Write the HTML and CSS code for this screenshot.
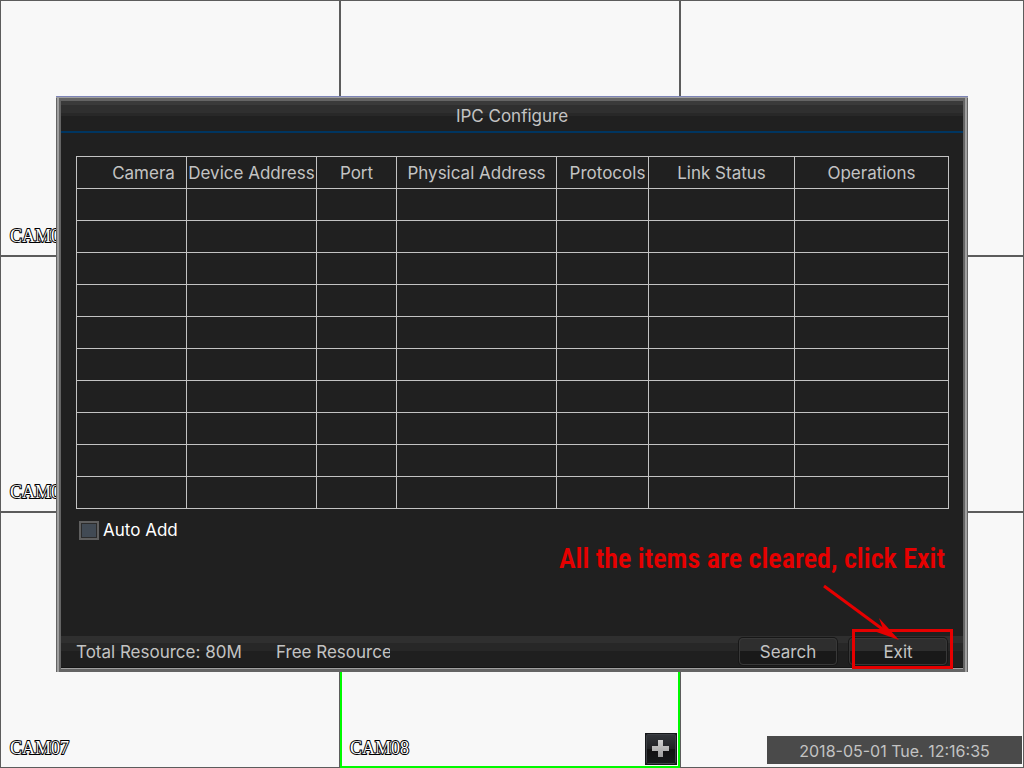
FILE: index.html
```html
<!DOCTYPE html>
<html lang="en">
<head>
<meta charset="utf-8">
<title>IPC Configure</title>
<link rel="stylesheet" href="styles.css">
</head>
<body>
<main class="wall">
  <section class="cell"><span class="cam">CAM01</span></section>
  <section class="cell"><span class="cam">CAM02</span></section>
  <section class="cell"><span class="cam">CAM03</span></section>
  <section class="cell"><span class="cam">CAM04</span></section>
  <section class="cell"><span class="cam">CAM05</span></section>
  <section class="cell"><span class="cam">CAM06</span></section>
  <section class="cell"><span class="cam">CAM07</span></section>
  <section class="cell cell-active">
    <span class="cam">CAM08</span>
    <button class="add" type="button" aria-label="Add camera">
      <svg viewBox="0 0 32 32" width="32" height="32" aria-hidden="true">
        <defs>
          <linearGradient id="plus" x1="0" y1="0" x2="0" y2="1"><stop offset="0" stop-color="#d0d0d0"/><stop offset="1" stop-color="#9c9c9c"/></linearGradient>
          <linearGradient id="tile" x1="0" y1="0" x2="0" y2="1"><stop offset="0" stop-color="#33363b"/><stop offset=".5" stop-color="#202124"/><stop offset=".52" stop-color="#111"/><stop offset="1" stop-color="#17191b"/></linearGradient>
        </defs>
        <rect width="32" height="32" fill="#15171a"/>
        <rect x="1.500" y="1.500" width="29" height="29" rx="1" fill="url(#tile)" stroke="#3d4045"/>
        <path d="M13 7h5v6h6v5h-6v6h-5v-6H7v-5h6z" fill="url(#plus)"/>
      </svg>
    </button>
  </section>
  <section class="cell cell-clock"><time class="clock" datetime="2018-05-01T12:16:35">2018-05-01 Tue. 12:16:35</time></section>
</main>

<div class="overlay">
  <div class="dialog" role="dialog" aria-labelledby="dialog-title">
    <h1 class="title" id="dialog-title">IPC Configure</h1>
    <div class="body">
      <table class="devices">
        <colgroup><col class="c-camera"><col class="c-address"><col class="c-port"><col class="c-physical"><col class="c-protocols"><col class="c-link"><col class="c-operations"></colgroup>
        <thead>
          <tr><th class="h-camera">Camera</th><th>Device Address</th><th>Port</th><th>Physical Address</th><th class="h-protocols">Protocols</th><th>Link Status</th><th>Operations</th></tr>
        </thead>
        <tbody>
          <tr><td></td><td></td><td></td><td></td><td></td><td></td><td></td></tr>
          <tr><td></td><td></td><td></td><td></td><td></td><td></td><td></td></tr>
          <tr><td></td><td></td><td></td><td></td><td></td><td></td><td></td></tr>
          <tr><td></td><td></td><td></td><td></td><td></td><td></td><td></td></tr>
          <tr><td></td><td></td><td></td><td></td><td></td><td></td><td></td></tr>
          <tr><td></td><td></td><td></td><td></td><td></td><td></td><td></td></tr>
          <tr><td></td><td></td><td></td><td></td><td></td><td></td><td></td></tr>
          <tr><td></td><td></td><td></td><td></td><td></td><td></td><td></td></tr>
          <tr><td></td><td></td><td></td><td></td><td></td><td></td><td></td></tr>
          <tr><td></td><td></td><td></td><td></td><td></td><td></td><td></td></tr>
        </tbody>
      </table>
      <label class="auto"><input type="checkbox" class="check">Auto Add</label>
      <p class="note">All the items are cleared, click Exit</p>
    </div>
    <footer class="footer">
      <span class="total">Total Resource: 80M</span>
      <span class="free">Free Resource</span>
      <div class="actions">
        <button class="btn" type="button">Search</button>
        <div class="marked">
          <button class="btn" type="button">Exit</button>
          <span class="frame"></span>
          <svg class="arrow" viewBox="0 0 80 60" width="80" height="60" aria-hidden="true">
            <path d="M3 5 64 50" stroke="#e60000" stroke-width="3" fill="none"/>
            <path d="M58 37 78 59 50 49 62 48z" fill="#e60000"/>
          </svg>
        </div>
      </div>
    </footer>
  </div>
</div>
</body>
</html>
```

FILE: styles.css
```css
* { box-sizing: border-box; }
body {
  margin: 0;
  background: #f8f8f8;
  color: #c3c3c3;
  font: 17px/20px Inter, "Liberation Sans", sans-serif;
}
button { font: inherit; color: inherit; }

.wall {
  display: grid;
  grid-template-columns: 340fr 340fr 344fr;
  grid-template-rows: repeat(3, 1fr);
  height: 100vh;
}
.cell {
  display: flex;
  align-items: flex-end;
  justify-content: space-between;
  padding: 0 2px 8px 9px;
  border: 1px solid #5c5c5c;
}
.cell-active {
  padding: 0 1px 1px 8px;
  border: 2px solid #00fa00;
}
.cell-active .cam { padding-bottom: 6px; }
.cell-clock { justify-content: flex-end; padding: 0 1px 3px 0; }
.cam {
  color: #fff;
  font: 18px/22px "Liberation Serif", serif;
  -webkit-text-stroke: 2px #000;
  paint-order: stroke fill;
}
.add {
  display: block;
  width: 32px;
  height: 32px;
  padding: 0;
  border: 0;
  background: none;
}
.add svg { display: block; }
.clock {
  width: 255px;
  padding: 5px 0 3px;
  background: #4a4a4a;
  text-align: center;
  font-size: 16px;
}

.overlay {
  position: absolute;
  inset: 0;
  display: flex;
  padding: 96px 56px;
}
.dialog {
  flex: 1;
  display: flex;
  flex-direction: column;
  padding: 5px 5px 4px;
  background: #202020;
  box-shadow:
    inset 0 1px #7d84b8, inset 0 2px #a0a0a0,
    inset 1px 0 #646464, inset -1px 0 #646464,
    inset 3px 0 #a0a0a0, inset -3px 0 #a0a0a0,
    inset 5px 0 #646464, inset -5px 0 #646464,
    inset 0 5px #646464, inset 0 -3px #646464, inset 0 -4px #a0a0a0;
}
.title {
  margin: 0;
  padding: 5px 0;
  border-bottom: 2px solid #003560;
  background: linear-gradient(#3a3a3a 4px, #2f2f2f 4px 12px, #282828 12px 15px, #202020 15px);
  text-align: center;
  font: inherit;
}
.body {
  flex: 1;
  display: flex;
  flex-direction: column;
  align-items: flex-start;
  padding: 23px 14px 0 15px;
}
.devices {
  width: 100%;
  border-collapse: collapse;
  table-layout: fixed;
}
.devices th, .devices td {
  height: 32px;
  padding: 0;
  border: 1px solid #c3c3c3;
  font-weight: 400;
  text-align: center;
  white-space: nowrap;
}
.devices .h-camera { padding-left: 24px; }
.devices .h-protocols { padding-left: 10px; }
.c-camera { width: 110px; }
.c-address { width: 130px; }
.c-port { width: 80px; }
.c-physical { width: 160px; }
.c-protocols { width: 92px; }
.c-link { width: 146px; }
.c-operations { width: 154px; }
.auto {
  display: flex;
  align-items: center;
  gap: 4px;
  margin: 11px 0 0 3px;
  color: #fff;
}
.check {
  appearance: none;
  width: 20px;
  height: 19px;
  margin: 0;
  border: 2px solid #5f5f5f;
  background: #414a54;
  box-shadow: inset 0 0 0 1px #2b2b2b;
}
.note {
  align-self: flex-end;
  margin: 0 4px 0 0;
  color: #e60000;
  font: 600 28px/38px "Roboto Condensed", "Liberation Sans Narrow", "Open Sans Condensed", "Liberation Sans", sans-serif;
  white-space: nowrap;
}
.footer {
  display: flex;
  align-items: center;
  padding: 0 16px 0 15px;
  height: 32px;
  border-bottom: 1px solid #141414;
  background: linear-gradient(#2f2f2f 7px, #272727 7px 15px, #1f1f1f 15px);
  white-space: nowrap;
}
.total { width: 200px; }
.free { width: 114px; overflow: hidden; }
.actions {
  display: flex;
  gap: 12px;
  margin-left: auto;
}
.btn {
  display: block;
  width: 98px;
  height: 27px;
  padding: 0;
  border: 1px solid #383838;
  border-radius: 4px;
  background: linear-gradient(#2e2e2e 50%, #191919 50%);
  box-shadow: 0 0 0 1px #171717;
}
.marked { position: relative; }
.frame {
  position: absolute;
  inset: -9px -6px -4px 3px;
  border: 3px solid #e60000;
}
.arrow {
  position: absolute;
  right: 46px;
  bottom: 24px;
}
```
